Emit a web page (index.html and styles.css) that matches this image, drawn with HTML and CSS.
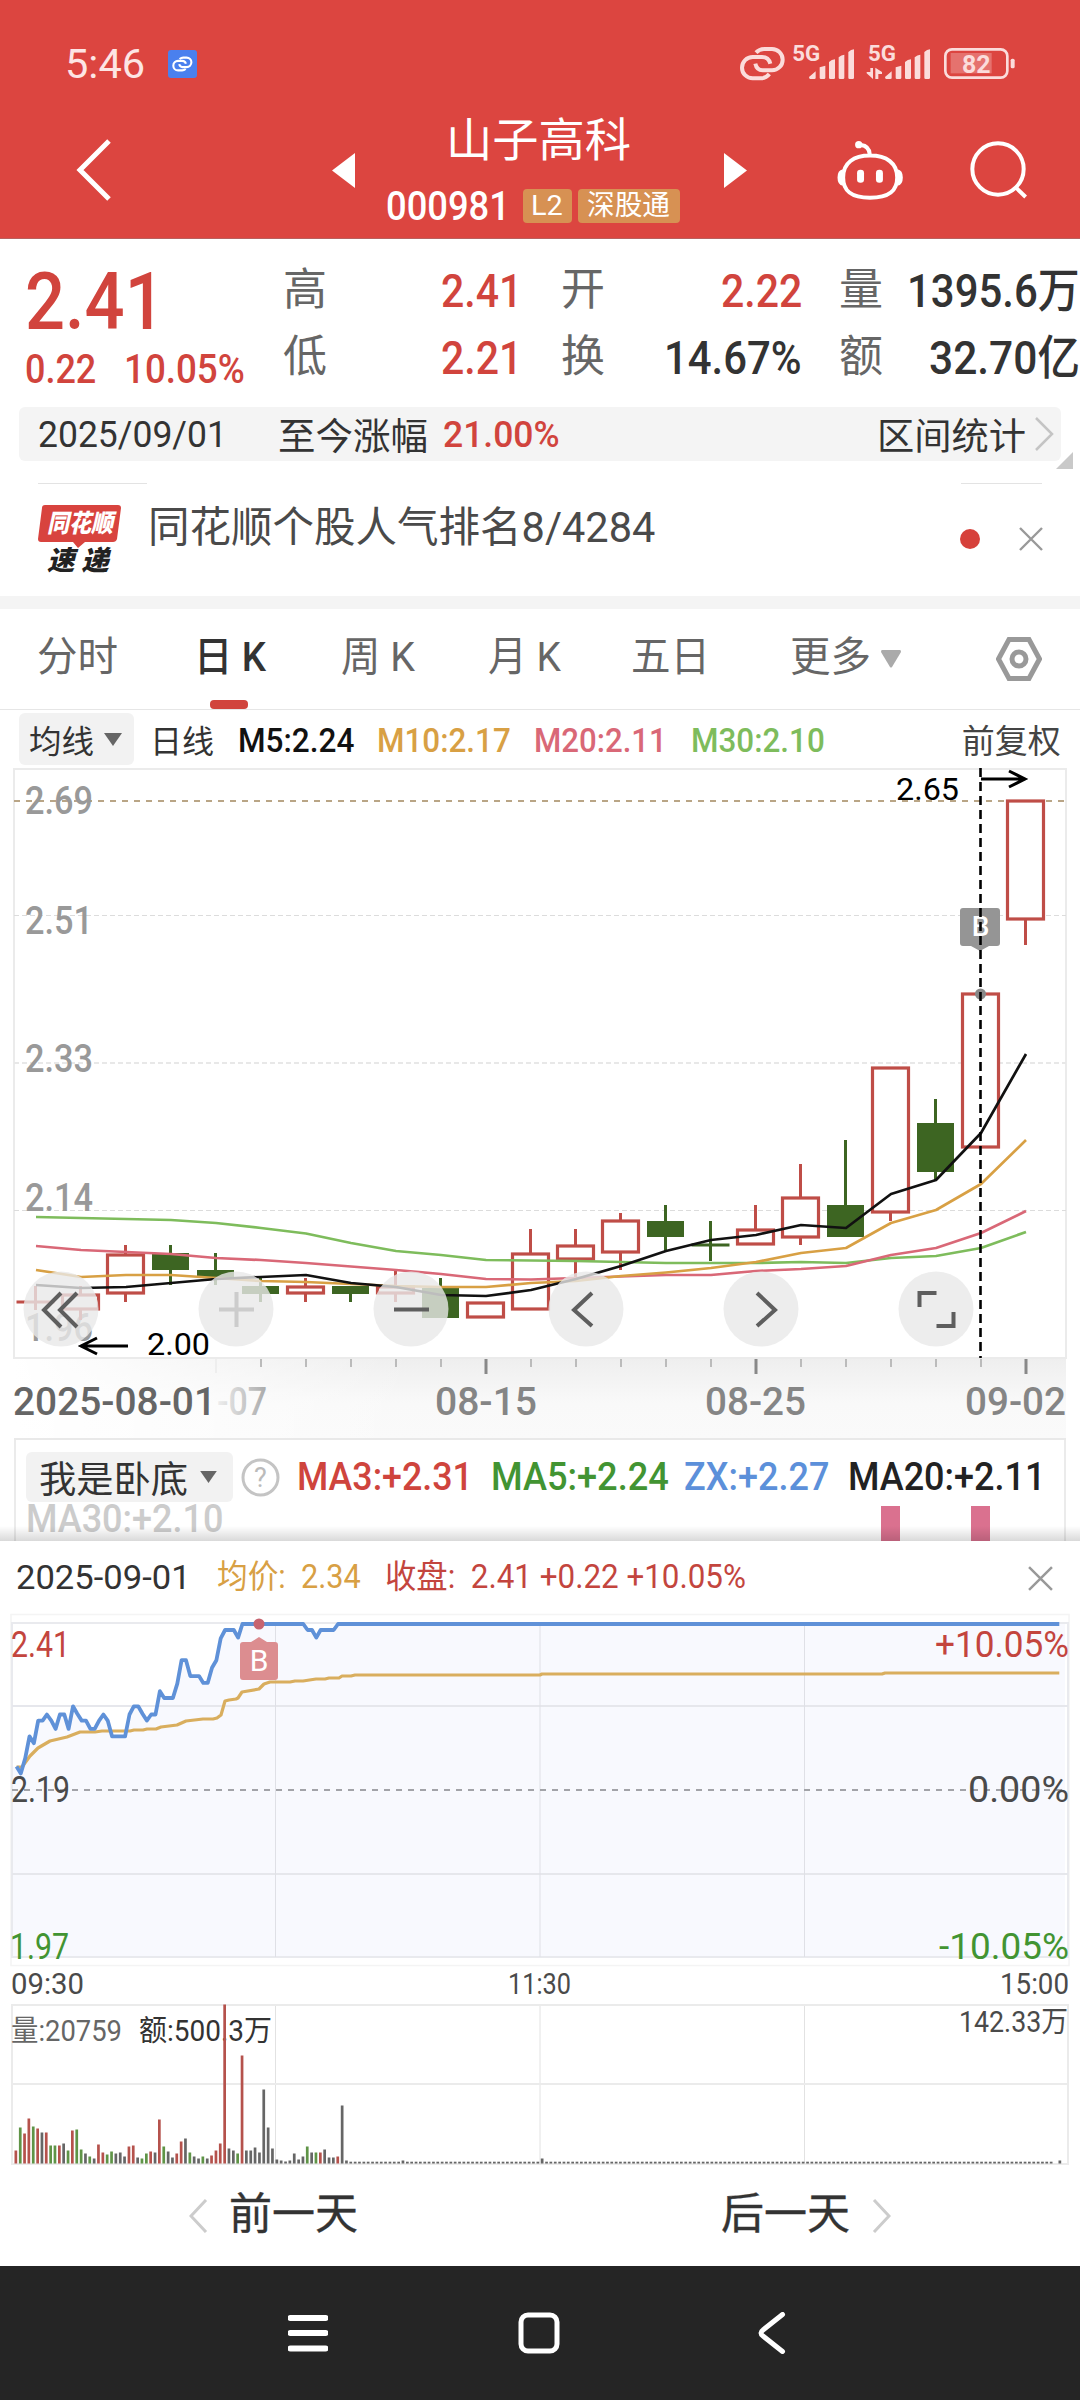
FILE: index.html
```html
<!DOCTYPE html>
<html lang="zh-CN">
<head>
<meta charset="utf-8">
<title>山子高科 000981</title>
<link rel="stylesheet" href="styles.css">
</head>
<body>
<header class="top">
  <div class="status">
    <span class="clock fit" data-w="80">5:46</span>
    <span class="linkbadge"><svg width="21" height="16" viewBox="30 46 136 108"><g class="rings"><path d="M78 66Q90 57 103 57h23a29 29 0 0 1 0 64h-28Q80 121 76 101"/><path d="M120 134Q108 143 96 143H68a29 29 0 0 1 0-64h28Q116 79 121 99"/></g></svg></span>
    <svg class="signals" width="276" height="44" viewBox="30 30 828 132">
      <g class="rings thin"><path d="M78 68Q88 57 103 57h23a31 31 0 0 1 0 64h-28Q80 121 76 101"/><path d="M118 132Q108 145 93 145H68a31 31 0 0 1 0-64h28Q116 81 121 101"/></g>
      <g class="pale">
        <text x="187" y="93" font-size="64" textLength="84" lengthAdjust="spacingAndGlyphs">5G</text>
        <text x="414" y="93" font-size="64" textLength="84" lengthAdjust="spacingAndGlyphs">5G</text>
        <path d="M237 141l20-17v20q0 3-4 3h-12q-4 0-4-6zM269 112l17-5v36q0 4-4 4h-9q-4 0-4-4zM297 96q8-8 18-8v55q0 4-4 4h-10q-4 0-4-4zM326 82q8-8 17-8v69q0 4-4 4h-9q-4 0-4-4zM355 66q8-8 17-8v85q0 4-4 4h-9q-4 0-4-4z"/>
        <path transform="translate(228 0)" d="M237 141l20-17v20q0 3-4 3h-12q-4 0-4-6zM269 112l17-5v36q0 4-4 4h-9q-4 0-4-4zM297 96q8-8 18-8v55q0 4-4 4h-10q-4 0-4-4zM326 82q8-8 17-8v69q0 4-4 4h-9q-4 0-4-4zM355 66q8-8 17-8v85q0 4-4 4h-9q-4 0-4-4z"/>
        <path d="M421 114h8v33l-19-17v-4h11zM436 113l20 13v6h-11v15h-9z"/>
        <rect x="842" y="86" width="12" height="29" rx="5"/>
        <rect x="662" y="69" width="123" height="61" fill-opacity=".3"/>
        <text x="696" y="129" font-size="77" textLength="86" lengthAdjust="spacingAndGlyphs">82</text>
      </g>
      <rect class="batt" x="646" y="58" width="186" height="85" rx="20"/>
    </svg>
  </div>
  <div class="titlebar">
    <svg class="back" width="35" height="62" viewBox="0 0 35 62"><path d="M33 2L4 31l29 29"/></svg>
    <svg class="prev" width="23" height="35" viewBox="0 0 23 35"><path d="M23 0v35L0 17.500z"/></svg>
    <div class="name">
      <h1 class="fit" data-w="185">山子高科</h1>
      <div class="code"><span class="num fit" data-w="124">000981</span><span class="tag l2"><span class="fit" data-w="32">L2</span></span><span class="tag sgt"><span class="fit" data-w="83">深股通</span></span></div>
    </div>
    <svg class="next" width="23" height="35" viewBox="0 0 23 35"><path d="M0 0v35l23-17.500z"/></svg>
    <svg class="robot" width="68" height="61" viewBox="318 330 204 184"><path class="ln" d="M420 377c50 0 82 22 82 66 0 40-24 61-82 61s-81-21-81-61c0-44 32-66 81-66zM419 372q-2-24-26-27"/><circle cx="386" cy="344" r="11"/><path d="M338 418v50q-16-3-16-25t16-25zM503 418v50q16-3 16-25t-16-25z"/><rect x="381" y="420" width="21" height="39" rx="10"/><rect x="438" y="420" width="21" height="39" rx="10"/></svg>
    <svg class="search" width="57" height="58" viewBox="720 336 171 174"><path class="ln" d="M857 475l30 29"/><circle class="ln" cx="804" cy="420" r="77"/></svg>
  </div>
</header>

<section class="quote">
  <div class="price">
    <span class="last fit" data-w="140">2.41</span>
    <div class="chg"><span class="fit" data-w="71">0.22</span><span class="pct fit" data-w="121">10.05%</span></div>
  </div>
  <div class="stats">
    <span class="k">高</span><span class="v red"><span class="fit" data-w="81">2.41</span></span>
    <span class="k">开</span><span class="v red"><span class="fit" data-w="81">2.22</span></span>
    <span class="k">量</span><span class="v"><span class="fit" data-w="173">1395.6万</span></span>
    <span class="k">低</span><span class="v red"><span class="fit" data-w="81">2.21</span></span>
    <span class="k">换</span><span class="v"><span class="fit" data-w="138">14.67%</span></span>
    <span class="k">额</span><span class="v"><span class="fit" data-w="151">32.70亿</span></span>
  </div>
</section>

<section class="since">
  <span class="d fit" data-w="189">2025/09/01</span>
  <span class="l fit" data-w="150">至今涨幅</span>
  <span class="p fit" data-w="117">21.00%</span>
  <span class="r fit" data-w="149">区间统计</span>
  <svg width="20" height="34" viewBox="0 0 20 34"><path d="M2 1l16 16L2 33"/></svg>
  <i class="corner"></i>
</section>

<section class="notice">
  <div class="rules"><i></i><i></i></div>
  <div class="nrow">
    <div class="logo">
      <svg width="84" height="72" viewBox="0 0 84 72"><path fill="#d8433e" d="M7 0h73q3 0 3 3l-4 31q-1 3-4 3H47l-7 6-5-6H3q-3 0-3-3L4 3q0-3 3-3z"/></svg>
      <span class="lt"><span class="fit" data-w="66">同花顺</span></span><span class="lb"><span class="fit" data-w="62">速 递</span></span>
    </div>
    <span class="ntext fit" data-w="507">同花顺个股人气排名8/4284</span>
    <i class="dot"></i>
    <svg class="x" width="24" height="24" viewBox="0 0 24 24"><path d="M1 1l22 22M23 1L1 23"/></svg>
  </div>
</section>

<nav class="tabs">
  <span class="t1 fit" data-w="81">分时</span>
  <span class="t2 on"><span class="fit" data-w="72">日 K</span></span>
  <span class="t3 fit" data-w="74">周 K</span>
  <span class="t4 fit" data-w="73">月 K</span>
  <span class="t5 fit" data-w="79">五日</span>
  <span class="t6 fit" data-w="81">更多</span>
  <svg class="tri" width="20" height="18" viewBox="0 0 20 18"><path fill="#aaa" d="M1 0h18q1 0 1 2L11 17q-1 1-2 0L0 2Q0 0 1 0z"/></svg>
  <svg class="hex" width="46" height="44" viewBox="0 0 46 44"><path d="M13 2.500h20L43.500 22 33 41.500H13L2.500 22z"/><circle cx="23" cy="22" r="7"/></svg>
</nav>

<section class="mabar">
  <span class="pill"><span class="fit" data-w="65">均线</span><svg width="18" height="13" viewBox="0 0 18 13"><path fill="#666" d="M0 0h18L9 13z"/></svg></span>
  <span class="m0 fit" data-w="64">日线</span>
  <span class="m1 fit" data-w="116">M5:2.24</span>
  <span class="m2 fit" data-w="134">M10:2.17</span>
  <span class="m3 fit" data-w="133">M20:2.11</span>
  <span class="m4 fit" data-w="134">M30:2.10</span>
  <span class="m5 fit" data-w="99">前复权</span>
</section>

<svg id="kchart" width="1080" height="672" viewBox="0 768 1080 672"></svg>

<section class="sub">
  <div class="subrow">
    <span class="pill"><span class="fit" data-w="149">我是卧底</span><svg width="17" height="12" viewBox="0 0 18 13"><path fill="#666" d="M0 0h18L9 13z"/></svg></span>
    <svg class="q" width="39" height="39" viewBox="0 0 39 39"><circle cx="19.500" cy="19.500" r="17.500"/><text x="19.500" y="29" text-anchor="middle">?</text></svg>
    <span class="s1 fit" data-w="176">MA3:+2.31</span>
    <span class="s2 fit" data-w="178">MA5:+2.24</span>
    <span class="s3 fit" data-w="145">ZX:+2.27</span>
    <span class="s4 fit" data-w="197">MA20:+2.11</span>
  </div>
  <span class="s5 fit" data-w="197">MA30:+2.10</span>
  <i class="bar b1"></i><i class="bar b2"></i><i class="shade"></i>
</section>

<section class="panel">
  <div class="phead">
    <span class="h1 fit" data-w="175">2025-09-01</span>
    <span class="h2 fit" data-w="144">均价:&nbsp; 2.34</span>
    <span class="h3 fit" data-w="361">收盘:&nbsp; 2.41 +0.22 +10.05%</span>
    <svg class="x" width="25" height="25" viewBox="0 0 24 24"><path d="M1 1l22 22M23 1L1 23"/></svg>
  </div>
  <svg id="intraday" width="1080" height="552" viewBox="0 1613 1080 552"></svg>
  <div class="pager">
    <svg width="19" height="34" viewBox="0 0 19 34"><path d="M17 1L2 17l15 16"/></svg>
    <span class="pv fit" data-w="129">前一天</span>
    <span class="nx fit" data-w="129">后一天</span>
    <svg class="nxi" width="19" height="34" viewBox="0 0 19 34"><path d="M2 1l15 16L2 33"/></svg>
  </div>
</section>

<footer class="sys">
  <svg class="menu" width="40" height="38" viewBox="0 0 40 38"><path d="M2.500 4h35M2.500 19h35M2.500 34.500h35"/></svg>
  <svg class="home" width="42" height="42" viewBox="0 0 42 42"><rect x="3" y="3" width="36" height="36" rx="7"/></svg>
  <svg class="bk" width="28" height="42" viewBox="0 0 28 42"><path d="M24.500 2.500L5 18q-4 3 0 6l19.500 15.500"/></svg>
</footer>
<script src="app.js"></script>
</body>
</html>
```
FILE: styles.css
```css
* { box-sizing: border-box; }
body {
  margin: 0; width: 1080px; height: 2400px; overflow: hidden; background: #fff; color: #333;
  font-family: Roboto, "Noto Sans CJK SC", sans-serif;
}
svg { display: block; flex: none; }
.fit { display: inline-block; white-space: nowrap; transform-origin: 0 50%; flex: none; }
.red { color: #d1443d; }

.top { height: 239px; background: #dc4540; border-bottom: 1px solid #b9605e; color: #fff; padding-top: 38px; }
.status { height: 52px; display: flex; align-items: center; }
.clock { margin-left: 65px; font-size: 41px; color: #fde5e4; }
.linkbadge { margin-left: 23px; width: 29px; height: 28px; background: #4a80ee; border-radius: 3px; display: flex; align-items: center; justify-content: center; }
.rings path { fill: none; stroke: #fff; stroke-width: 14; }
.rings.thin path { stroke: #fbdcdb; stroke-width: 12; }
.signals { margin-left: 543px; margin-top: -4px; }
.pale { fill: #fbdcdb; font-weight: 700; }
.batt { fill: none; stroke: #fbdcdb; stroke-width: 8; }
.titlebar { height: 148px; padding-top: 12px; display: flex; align-items: center; fill: #fff; }
.back { margin-left: 76px; fill: none; stroke: #fff; stroke-width: 5; }
.prev { margin-left: 221px; }
.name { margin-left: 31px; width: 294px; height: 111px; display: flex; flex-direction: column; justify-content: space-between; }
.name h1 { margin: 0 0 0 60px; font-size: 46px; line-height: 50px; font-weight: 400; align-self: flex-start; }
.code { display: flex; align-items: center; height: 40px; }
.code .num { font-size: 41px; line-height: 40px; font-weight: 500; }
.tag { background: #d79153; border-radius: 4px; height: 34px; display: flex; align-items: center; justify-content: center; font-size: 28px; line-height: 34px; }
.l2 { margin-left: 13px; width: 49px; }
.sgt { margin-left: 6px; width: 102px; }
.next { margin-left: 44px; }
.robot { margin-left: 89px; }
.search { margin-left: 66px; }
.ln { fill: none; stroke: #fff; stroke-width: 12; }

.quote { height: 168px; display: flex; padding: 18px 0 0 25px; }
.price { width: 258px; color: #d1443d; padding-top: 3px; }
.last { font-size: 79px; font-weight: 500; line-height: 84px; display: block; width: max-content; }
.chg { display: flex; font-size: 41px; line-height: 50px; font-weight: 500; }
.pct { margin-left: 28px; }
.stats { display: grid; grid-template-columns: 43px 196px 83px 197px 81px 197px; grid-auto-rows: 67px; font-size: 47px; line-height: 67px; font-weight: 500; }
.k { font-size: 44px; font-weight: 400; color: #666; text-align: right; }
.v { display: flex; justify-content: flex-end; }

.since { position: relative; height: 54px; margin: 0 19px; background: #f4f4f4; border-radius: 6px; display: flex; align-items: center; font-size: 37px; }
.since svg { margin-left: 8px; fill: none; stroke: #c4c4c4; stroke-width: 2.5; }
.since .d { margin-left: 19px; }
.since .l { margin-left: 51px; }
.since .p { margin-left: 15px; color: #d1443d; font-weight: 500; }
.since .r { margin-left: 317px; }
.corner { position: absolute; right: -12px; bottom: -8px; border-style: solid; border-width: 0 0 17px 17px; border-color: transparent transparent #c9c9c9; }

.notice { height: 148px; border-bottom: 13px solid #f4f4f4; padding-top: 22px; }
.rules { display: flex; justify-content: space-between; padding: 0 38px; }
.rules i { height: 1px; width: 109px; background: #e3e3e3; }
.rules i + i { width: 81px; }
.nrow { display: flex; align-items: flex-start; }
.logo { position: relative; margin: 21px 0 0 38px; width: 84px; height: 72px; }
.lt, .lb { position: absolute; left: 9px; top: 5px; font-size: 25px; line-height: 27px; font-weight: 900; font-style: italic; color: #fff; }
.lb { left: 9px; top: 40px; font-size: 27px; line-height: 32px; color: #222; }
.ntext { margin: 18px 0 0 26px; font-size: 42px; line-height: 52px; color: #4a4a4a; }
.dot { margin: 45px 0 0 305px; width: 20px; height: 20px; border-radius: 50%; background: #d6413b; }
.x { fill: none; stroke: #999; stroke-width: 2.4; }
.nrow .x { margin: 43px 0 0 39px; }

.tabs { height: 101px; border-bottom: 1px solid #e6e6e6; display: flex; align-items: center; font-size: 41px; line-height: 48px; color: #666; }
.tabs > span { margin-bottom: 4px; }
.tabs .t1 { margin-left: 37px; }
.on { position: relative; margin-left: 76px; color: #333; font-weight: 500; }
.on::after { content: ""; position: absolute; left: 16px; top: 67px; width: 38px; height: 9px; border-radius: 4px; background: #d1443d; }
.tabs .t3 { margin-left: 75px; }
.tabs .t4 { margin-left: 73px; }
.tabs .t5 { margin-left: 70px; }
.tabs .t6 { margin-left: 80px; }
.tri { margin-left: 10px; }
.hex { margin-left: 95px; fill: none; stroke: #999; stroke-width: 5; }

.mabar { height: 58px; display: flex; align-items: center; font-size: 34px; color: #333; }
.pill { background: #f2f2f2; border-radius: 6px; display: flex; align-items: center; }
.mabar .pill { margin-left: 19px; width: 115px; height: 52px; padding-left: 10px; font-size: 32px; }
.mabar .pill svg { margin-left: 10px; }
.m0 { margin-left: 16px; font-size: 32px; }
.m1 { margin-left: 24px; color: #111; font-weight: 500; margin-top: 2px; }
.m2 { margin-left: 23px; color: #d8a044; font-weight: 500; margin-top: 2px; }
.m3 { margin-left: 23px; color: #d96877; font-weight: 500; margin-top: 2px; }
.m4 { margin-left: 24px; color: #7ebc5c; font-weight: 500; margin-top: 2px; }
.m5 { margin-left: 137px; font-size: 33px; color: #444; }

.lab { fill: #999; font-weight: 500; font-size: 38px; }
.date { fill: #666; font-weight: 500; font-size: 38px; }
.date.lt2 { fill: #858585; }
.mark { fill: #000; font-size: 31px; }

.sub { position: relative; height: 101px; margin: 0 14px; border: solid #ebebeb; border-width: 0 2px; }
.subrow { display: flex; align-items: center; height: 50px; padding: 12px 0 0 10px; font-size: 38px; font-weight: 500; box-sizing: content-box; }
.sub .pill { width: 207px; height: 50px; padding-left: 13px; font-size: 37px; font-weight: 400; }
.sub .pill svg { margin-left: 12px; }
.q { margin-left: 8px; fill: none; stroke: #c4c4c4; stroke-width: 3; }
.q text { fill: #bbb; stroke: none; font-size: 27px; font-weight: 400; }
.s1 { margin-left: 17px; color: #cf443d; }
.s2 { margin-left: 18px; color: #429432; }
.s3 { margin-left: 15px; color: #5c90da; }
.s4 { margin-left: 19px; color: #222; }
.s5 { margin-left: 10px; font-size: 38px; line-height: 35px; color: #ccc; font-weight: 500; }
.bar { position: absolute; top: 66px; width: 19px; height: 35px; background: #da718f; }
.b1 { left: 865px; }
.b2 { left: 955px; }
.shade { position: absolute; left: -16px; width: 1080px; bottom: 0; height: 15px; background: linear-gradient(rgba(0,0,0,0), rgba(0,0,0,.15)); }

.phead { height: 72px; padding-top: 2px; display: flex; align-items: center; font-size: 33px; line-height: 38px; }
.phead .h1 { margin-left: 16px; }
.h2 { margin-left: 26px; color: #d8a044; margin-bottom: 3px; }
.h3 { margin-left: 25px; color: #c3453e; margin-bottom: 3px; }
.phead .x { margin-left: 282px; }
.pager { height: 101px; display: flex; align-items: center; font-size: 43px; line-height: 50px; }
.pager span { margin-bottom: 4px; -webkit-text-stroke: .4px #333; }
.pager svg { margin-left: 189px; fill: none; stroke: #ccc; stroke-width: 3; }
.pager .pv { margin-left: 21px; }
.pager .nx { margin-left: 363px; }
.pager .nxi { margin-left: 22px; }

.sys { height: 134px; background: #252525; display: flex; align-items: center; fill: none; stroke: #fff; stroke-width: 5; stroke-linecap: round; }
.menu { margin-left: 288px; stroke-width: 6; }
.home { margin-left: 190px; }
.bk { margin-left: 198px; }
.ax { font-size: 36px; fill: #4a4a4a; }
.tm { font-size: 29px; fill: #4a4a4a; }
```
FILE: app.js
```js
// squeeze each label to its column width
document.querySelectorAll('.fit').forEach(e => {
  const n = e.offsetWidth, w = +e.dataset.w;
  e.style.transform = `scaleX(${w / n})`;
  e.style.marginRight = (w - n) + 'px';
});

const line = (x1, y1, x2, y2, c, w, d) => `<line x1="${x1}" y1="${y1}" x2="${x2}" y2="${y2}" stroke="${c}" stroke-width="${w}"${d ? ` stroke-dasharray="${d}"` : ''}/>`;
const rect = (x, y, w, h, f, extra = '') => `<rect x="${x}" y="${y}" width="${w}" height="${h}" fill="${f}" ${extra}/>`;
const text = (x, y, s, len, cls, extra = '') => `<text x="${x}" y="${y}" class="${cls}" textLength="${len}" lengthAdjust="spacingAndGlyphs" ${extra}>${s}</text>`;
const poly = (pts, c, w) => `<polyline points="${pts.map(p => p.join()).join(' ')}" fill="none" stroke="${c}" stroke-width="${w}" stroke-linejoin="round"/>`;

// daily candles: [up, top, bottom, wick top, wick bottom]
const K = [[1,1302,1302,1286,1310],[1,1294,1310,1286,1320],[1,1254,1294,1245,1302],[0,1253,1270,1245,1285],[0,1270,1278,1253,1285],
[0,1286,1294,1278,1302],[1,1286,1294,1278,1302],[0,1286,1294,1286,1302],[1,1286,1294,1270,1302],[0,1288,1318,1278,1318],
[1,1302,1318,1302,1318],[1,1253,1310,1229,1310],[1,1245,1260,1229,1280],[1,1220,1253,1213,1270],[0,1221,1237,1205,1252],
[0,1245,1245,1221,1261],[1,1229,1245,1205,1245],[1,1197,1238,1164,1245],[0,1205,1237,1140,1237],[1,1067,1213,1067,1221],
[0,1123,1172,1099,1180],[1,993,1148,993,1148],[1,800,920,800,945]];
const cx = i => 35.500 + 45 * i;
const MA = {
  '#7ebc5c': [1217,1218,1219,1220,1223,1228,1233.5,1243,1251,1255,1260,1260.5,1261,1262,1263,1263,1263,1262,1263,1258,1256,1248,1232],
  '#d96877': [1246,1250,1252,1254,1258,1260,1263,1266.5,1270,1274,1279,1279.5,1278,1276.5,1275,1275,1271,1269,1266,1255,1248,1233,1211],
  '#d8a044': [1270,1277,1275,1275,1278,1281,1282,1284,1286,1287,1287,1283,1281,1276,1272.5,1268,1262,1253,1248,1223,1210,1184,1140],
  '#111': [1285,1288,1287,1283,1279,1277,1275,1283,1287,1295,1296,1290,1279,1266,1251,1240,1235,1225,1228,1194,1180,1133,1054]
};
let k = `<defs><linearGradient id="g1" x2="0" y2="1"><stop offset="0" stop-color="#eeeeee"/><stop offset=".55" stop-color="#f9f9f9"/><stop offset="1" stop-color="#fafafa"/></linearGradient>
<linearGradient id="g2"><stop offset="0" stop-color="#fff"/><stop offset="1" stop-color="#fff" stop-opacity="0"/></linearGradient>
<linearGradient id="g3"><stop offset="0" stop-color="#eee"/><stop offset="1" stop-color="#aaa"/></linearGradient></defs>`;
k += rect(14, 1358, 1052, 82, 'url(#g1)') + rect(14, 1358, 400, 82, 'url(#g2)');
k += `<rect x="14" y="769" width="1052" height="589" fill="none" stroke="#ebebeb" stroke-width="2"/>`;
k += line(14, 915.5, 1066, 915.5, '#dcdcdc', 1, '5 3') + line(14, 1063, 1066, 1063, '#e8e8e8', 2, '5 3') + line(14, 1210.5, 1066, 1210.5, '#dcdcdc', 1, '5 3');
k += line(14, 801, 1066, 801, '#b9a586', 2, '6 6');
[['2.69', 813.5], ['2.51', 934], ['2.33', 1072], ['2.14', 1211], ['1.96', 1341]].forEach(([s, y]) => k += text(25, y, s, 68, 'lab'));
k += text(896, 800, '2.65', 63, 'mark') + text(147, 1355, '2.00', 63, 'mark');
K.forEach(([up, t, b, wt, wb], i) => {
  const x = cx(i), c = up ? '#bf4d47' : '#3d6522';
  if (wt < t) k += line(x, wt, x, t, c, 3);
  if (wb > b) k += line(x, b, x, wb, c, 3);
  if (t === b) k += line(x - 19, t, x + 19, t, c, 3);
  else if (up) k += rect(x - 18, t + 1, 36, b - t - 2, '#fff', `stroke="${c}" stroke-width="3.200"`);
  else k += rect(x - 18.500, t, 37, b - t, c);
});
for (const c in MA) k += poly(MA[c].map((y, i) => [cx(i) + .5, y]), c, 2.700);
// trade marker
k += `<circle cx="980.500" cy="994" r="5.500" fill="#888"/><path d="M963 908h34q3 0 3 3v32q0 3-3 3h-8l-9 5-9-5h-8q-3 0-3-3v-32q0-3 3-3z" fill="#959595"/>`;
k += `<text x="980.500" y="936" text-anchor="middle" font-size="28" font-weight="500" fill="#fff">B</text>`;
k += line(980.5, 768, 980.5, 1358, '#000', 2.600, '9 5');
k += `<g fill="none" stroke="#000" stroke-width="3"><path d="M981 779h43M1009 771l16 8-16 8M128 1346H81M97 1338l-16 8 16 8"/></g>`;
// axis ticks
for (let i = 4; i < 23; i++) {
  const major = i === 10 || i === 16 || i === 22;
  k += line(cx(i) + .5, 1359, cx(i) + .5, i === 4 ? 1373 : major ? 1374 : 1367, i === 4 ? '#eee' : major ? '#888' : '#bbb', major ? 3 : 2);
}
k += text(13, 1415, '2025-08-01', 203, 'date') + `<text x="217" y="1415" class="date" style="fill:url(#g3)" textLength="50" lengthAdjust="spacingAndGlyphs">-07</text>`;
k += text(435, 1415, '08-15', 102, 'date lt2') + text(705, 1415, '08-25', 101, 'date lt2') + text(965, 1415, '09-02', 101, 'date lt2');
k += line(14, 1439, 1066, 1439, '#e9e9e9', 2);
// floating controls
[61, 236, 411, 586, 761, 936].forEach(x => k += `<circle cx="${x}" cy="1309" r="37.500" fill="#e8e8e8" fill-opacity=".8"/>`);
k += `<g fill="none" stroke="#5e5e5e" stroke-width="4"><path d="M61 1298l-17 17 17 17M77 1298l-17 17 17 17" transform="translate(0 -5)"/><path d="M394 1309.500h35M592 1293l-18 17 18 16M757 1293l18 17-18 16M919.500 1307v-14h17M953.500 1312v14h-17"/><path stroke="#ccc" d="M219 1309.500h35M236.500 1292v35"/></g>`;
document.getElementById('kchart').innerHTML = k;

// intraday prices in cents, one per minute from 09:30
const P = [222.1,221.2,223.2,226.1,225.2,228.2,228.2,229,228.2,227.1,229,229,227.1,230.1,229.1,228.2,228.2,227.1,227.1,228.2,229,228.2,226.1,226.1,226.1,226.1,229,230.1,230.1,229.1,228.2,229,229,232.1,231.2,231.2,231.2,233.1,236.2,236.2,234.1,234.1,234.1,233.2,233.2,235.2,236.2,239.1,240.2,240.2,240.2,239.2];
for (let i = 52; i <= 240; i++) P.push({67:240.2,68:240.2,69:239.2,70:240.2,71:240.2,72:240.2,73:240.2}[i] || 241);
const px = i => +(16.5 + 4.345 * i).toFixed(1), py = p => +(1790 - (p - 219) * 7.545).toFixed(1);
const pl = P.map((p, i) => [px(i), py(p)]);
const avg = [[16.5,1767],[22,1767],[30,1756],[38,1748],[50,1741],[67,1737],[80,1732],[95,1732],[102,1731],[130,1731],[134,1730],[143,1730],[147,1729],[156,1729],[161,1727],[177,1725],[186,1721],[203,1719],[213,1719],[217,1718],[221,1715],[225,1701],[229,1700],[236,1699],[238,1698],[242,1692],[259,1689],[264,1684],[270,1682],[290,1682],[295,1681],[303,1681],[316,1679],[325,1679],[329,1678],[339,1678],[342,1676],[351,1676],[355,1675],[540,1675],[542,1674],[882,1674],[885,1673],[1059.3,1673]];
let m = '';
m += `<rect x="11" y="1614.500" width="1058" height="351" fill="none" stroke="#f4f4f4" stroke-width="1.500"/>`;
m += `<polygon fill="#f8f9fe" points="${pl.map(p => p.join()).join(' ')} 1065,1622 1065,1957 12,1957 12,1767"/>`;
m += `<rect x="12" y="1623" width="1056" height="334" fill="none" stroke="#e9eaee" stroke-width="2"/>`;
m += line(12, 1706, 1068, 1706, '#e6e7ec', 2) + line(12, 1874, 1068, 1874, '#e6e7ec', 2);
[275.5, 540, 804.5].forEach(x => m += line(x, 1623, x, 1957, '#dfe0e6', 1) + line(x, 2005, x, 2164, '#e2e2e2', 1));
m += line(12, 1790, 1068, 1790, '#a2a3a8', 2, '6 6');
m += poly(avg, '#d9ae5e', 3.200) + poly(pl, '#5f91d8', 3.800);
m += `<circle cx="259" cy="1624" r="5.500" fill="#c76470"/><path d="M243 1642h8l8-5 8 5h8q3 0 3 3v32q0 3-3 3h-32q-3 0-3-3v-32q0-3 3-3z" fill="#dc8d90"/><text x="259" y="1671" text-anchor="middle" font-size="30" fill="#fff">B</text>`;
m += text(11, 1657, '2.41', 59, 'ax', 'style="fill:#c3453e"') + text(11, 1802, '2.19', 59, 'ax') + text(10, 1959, '1.97', 59, 'ax', 'style="fill:#429432"');
m += text(935, 1657, '+10.05%', 134, 'ax', 'style="fill:#c3453e"') + text(968, 1802, '0.00%', 101, 'ax') + text(939, 1959, '-10.05%', 130, 'ax', 'style="fill:#429432"');
m += text(11, 1994, '09:30', 73, 'tm') + text(508, 1994, '11:30', 63, 'tm') + text(1000, 1994, '15:00', 69, 'tm');
m += `<rect x="12" y="2005" width="1056" height="159" fill="none" stroke="#ebebeb" stroke-width="2"/>` + line(12, 2084, 1068, 2084, '#ebebeb', 2);
m += text(11, 2041, '量:20759', 111, 'tm', 'style="fill:#666"') + text(139, 2041, '额:500.3万', 133, 'tm', 'style="fill:#333"') + text(959, 2032, '142.33万', 109, 'tm');
// minute volumes: colour letter + bar height
const V = 'r13 g36 r30 r45 g37 r35 k31 r31 g18 g18 r18 k20 g13 r33 g34 g14 k10 g7 k5 r19 r11 g9 g12 k10 k11 k7 r17 r18 k6 g5 g10 r12 k11 r44 g17 k12 k6 r10 r22 k25 g11 k7 k5 g7 k5 r8 r13 r20 r159 k15 k13 g10 r108 k13 k13 k16 k11 k74 k36 k15 k4 k3 k2 k3 k10 k4 k7 g17 k11 g11 r11 k14 k6 k6 r7 k58 k3'.split(' ');
while (V.length < 239) V.push(V.length === 121 ? 'k5' : V.length === 89 ? 'k3' : 'k1.8');
V.push('k0', 'k3');
V.forEach((v, i) => m += rect((14.5 + 4.35 * i).toFixed(1), 2163.5 - v.slice(1), 2.700, v.slice(1), { r: '#b5524c', g: '#5f9447', k: '#666' }[v[0]]));
document.getElementById('intraday').innerHTML = m;
```
